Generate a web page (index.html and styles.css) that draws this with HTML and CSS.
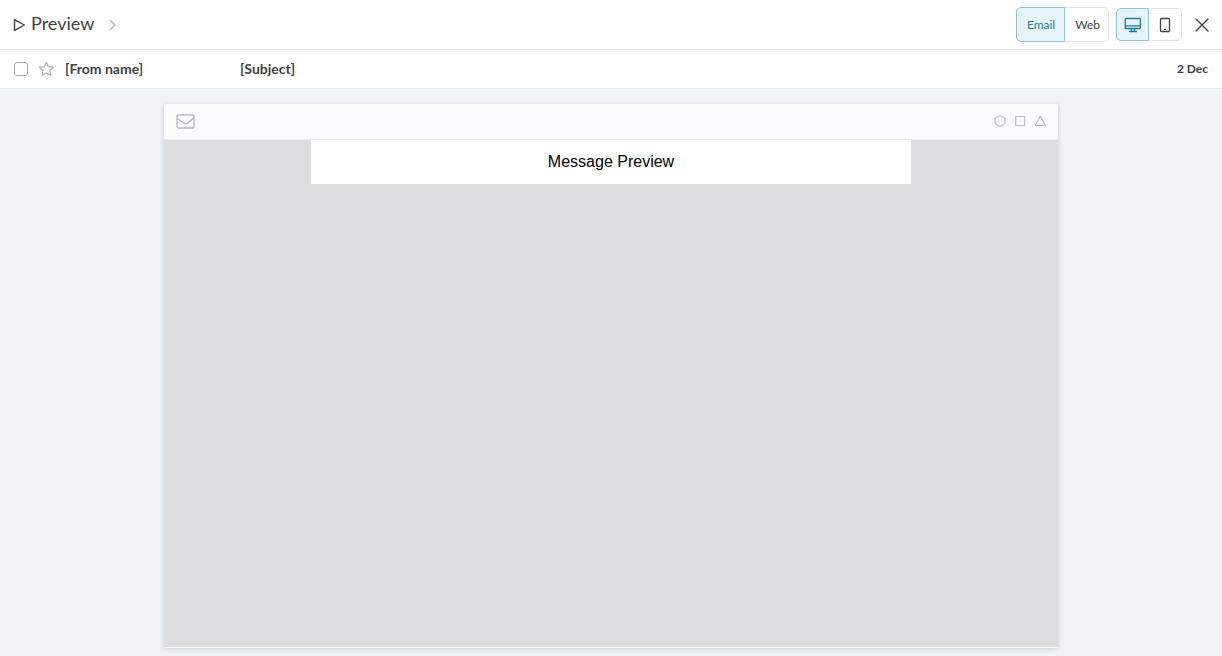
FILE: index.html
```html
<!DOCTYPE html>
<html lang="en">
<head>
  <meta charset="UTF-8">
  <title>Message Preview</title>
  <meta name="viewport" content="width=device-width, initial-scale=1">
  <link rel="stylesheet" href="styles.css">
</head>
<body>
  <header class="topbar">
    <h1 class="title">
      <svg class="play" width="12" height="14" viewBox="0 0 12 14"><path d="M1.5 1.6v10.8L11.3 7z"/></svg>
      Preview
    </h1>
    <svg class="chevron" width="8" height="12" viewBox="0 0 8 12"><path d="M1.5 1.5 6 6 1.5 10.5"/></svg>
    <div class="tools">
      <div class="switch switch-text">
        <button type="button" class="active">Email</button>
        <button type="button">Web</button>
      </div>
      <div class="switch switch-icon">
        <button type="button" class="active" aria-label="Desktop">
          <svg width="18" height="16" viewBox="0 0 18 16"><rect x="1.2" y="1.5" width="15.2" height="10" rx=".8"/><path d="M1.5 8.9h15M7.3 11.5v2.7M10.5 11.5v2.7M5.5 14.5h7"/></svg>
        </button>
        <button type="button" aria-label="Mobile">
          <svg width="12" height="16" viewBox="0 0 12 16"><rect x="1.5" y="1.5" width="9" height="13" rx="1"/><path d="M5.5 12.4h1"/></svg>
        </button>
      </div>
      <button type="button" class="close" aria-label="Close">
        <svg width="14" height="14" viewBox="0 0 14 14"><path d="M1 1l12 12M13 1 1 13"/></svg>
      </button>
    </div>
  </header>

  <div class="inbox-row">
    <input type="checkbox" class="check" aria-label="Select message">
    <button type="button" class="star" aria-label="Star message">
      <svg width="16" height="16" viewBox="0 0 16 16"><path d="M8.3 1.2l2.1 4.4 4.8.6-3.5 3.3.9 4.8L8.3 12 4 14.3l.9-4.8-3.5-3.3 4.8-.6z"/></svg>
    </button>
    <span class="from">[From name]</span>
    <span class="subject">[Subject]</span>
    <time class="date">2 Dec</time>
  </div>

  <main class="stage">
    <section class="window">
      <div class="window-bar">
        <svg class="mail" width="19" height="15" viewBox="0 0 19 15"><rect x="1" y="1" width="17" height="13" rx="1.4"/><path d="M1.2 4.2 8.2 9.5q1.3.9 2.6 0l7-5.3"/></svg>
        <div class="shapes">
          <svg width="12" height="12" viewBox="0 0 12 12"><circle cx="6" cy="6" r="5.2"/></svg>
          <svg width="12" height="12" viewBox="0 0 12 12"><rect x="1.7" y="1.5" width="9" height="9" rx=".6"/></svg>
          <svg width="12" height="12" viewBox="0 0 12 12"><path d="M6.4 1.3 1.3 10.5h10.2z"/></svg>
        </div>
      </div>
      <div class="window-body">
        <div class="message">Message Preview</div>
      </div>
    </section>
  </main>
</body>
</html>
```
FILE: styles.css
```css
* {
  box-sizing: border-box;
}
body {
  margin: 0;
  min-height: 100vh;
  display: flex;
  flex-direction: column;
  background: #eff3f7;
  font-family: Lato, sans-serif;
  color: #414246;
}
button {
  font: inherit;
  color: inherit;
  margin: 0;
  padding: 0;
  border: 0;
  background: none;
  cursor: pointer;
}
svg {
  display: block;
  flex: none;
  fill: none;
  stroke: currentColor;
  stroke-linejoin: round;
  stroke-linecap: round;
}

/* Top bar */
.topbar {
  display: flex;
  align-items: center;
  height: 50px;
  padding: 0 13px;
  background: #fff;
  border-bottom: 1px solid #e4e6e8;
}
.title {
  display: flex;
  align-items: center;
  gap: 6px;
  margin: 0;
  padding-bottom: 4px;
  font-size: 18px;
  font-weight: 400;
  line-height: 22px;
}
.play {
  margin-top: 4px;
  stroke-width: 1.4;
}
.chevron {
  margin-left: 15px;
  color: #b4b6b8;
  stroke-width: 1.5;
}
.tools {
  display: flex;
  align-items: center;
  gap: 7px;
  margin-left: auto;
}
.switch {
  display: flex;
}
.switch button {
  display: flex;
  align-items: center;
  justify-content: center;
  border: 1px solid #e2e6e9;
}
.switch button:first-child {
  border-radius: 5px 0 0 5px;
}
.switch button:last-child {
  border-left: 0;
  border-radius: 0 5px 5px 0;
}
.switch .active {
  color: #1c7f97;
  background: #e6f3f9;
  border-color: #8cc5d3;
}
.switch-text button {
  height: 35px;
  padding: 0 8px 0 10px;
  font-size: 12px;
}
.switch-text .active {
  padding-right: 9px;
}
.switch-icon button {
  width: 33px;
  height: 33px;
  stroke-width: 1.3;
}
.close {
  margin-left: 6px;
  stroke-width: 1.4;
}

/* Inbox row */
.inbox-row {
  display: flex;
  align-items: center;
  height: 39px;
  padding: 0 14px;
  background: #fff;
  border-bottom: 1px solid #e8ebed;
  font-size: 14px;
  font-weight: 700;
}
.check {
  appearance: none;
  width: 14px;
  height: 14px;
  margin: 0;
  border: 1px solid #a9abad;
  border-radius: 3px;
}
.star {
  margin: 0 11px 0 10px;
  color: #b0b2b4;
  stroke-width: 1.3;
}
.from,
.subject,
.date {
  padding-bottom: 2px;
}
.from {
  width: 175px;
}
.date {
  margin-left: auto;
  font-size: 12px;
}

/* Mail window */
.stage {
  flex: 1;
  display: flex;
  justify-content: center;
  padding: 15px 16px 8px;
}
.window {
  display: flex;
  flex-direction: column;
  width: 100%;
  max-width: 894px;
  border-radius: 2px;
  background: #fbfcfe;
  box-shadow: 0 1px 5px rgba(60, 70, 80, 0.22);
}
.window-bar {
  display: flex;
  align-items: center;
  justify-content: space-between;
  height: 36px;
  padding: 0 12px 1px;
  color: #b9bbbd;
  border-bottom: 1px solid #e9ecef;
}
.mail {
  stroke-width: 1.4;
}
.shapes {
  display: flex;
  gap: 8px;
  stroke-width: 1.2;
}
.window-body {
  flex: 1;
  margin-bottom: 1px;
  background: #dddddf;
}
.message {
  max-width: 600px;
  margin: 0 auto;
  padding: 12px;
  background: #fff;
  color: #000;
  font-family: "Liberation Sans", Arial, sans-serif;
  font-size: 16px;
  line-height: 20px;
  text-align: center;
}
```
